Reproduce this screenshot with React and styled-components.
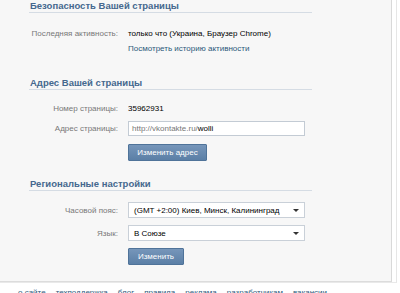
import React from "react";
import styled, { createGlobalStyle } from "styled-components";

const Global = createGlobalStyle`
  html, body { margin: 0; padding: 0; background: #fff; }
  body { font-family: "Liberation Sans", Arial, sans-serif; font-size: 8px; color: #000; }
`;

const Outer = styled.div`
  width: 396px;
  border-right: 1px solid #e6e6e6;
  border-bottom: 1px solid #e9e9e9;
`;

const Panel = styled.div`
  width: 392px;
  height: 282px;
  box-sizing: border-box;
  background: #f7f7f7;
  border-right: 1px solid #d9d9d9;
  border-bottom: 1px solid #dcdcdc;
  padding: 0 0 0 29px;
  display: flex;
  flex-direction: column;
`;

const Section = styled.section`
  width: 283px;
  margin-top: ${(p) => p.$top}px;
  display: flex;
  flex-direction: column;
`;

const Header = styled.h2`
  margin: 0;
  font-size: 9.5px;
  font-weight: bold;
  color: #45688e;
  line-height: 11px;
  height: 11px;
  padding: 0 0 1px 1px;
  border-bottom: 1px solid #d5dce4;
`;

const Row = styled.div`
  display: flex;
  align-items: center;
  margin-top: ${(p) => p.$top}px;
  min-height: ${(p) => p.$h || 11}px;
`;

const Label = styled.div`
  width: 89px;
  flex: none;
  text-align: right;
  color: #777;
  margin-right: 10px;
  white-space: nowrap;
`;

const Value = styled.div`
  color: #000;
  white-space: nowrap;
`;

const Link = styled.a`
  color: #2b587a;
  text-decoration: none;
  white-space: nowrap;
`;

const Input = styled.div`
  width: 177px;
  height: 15px;
  box-sizing: border-box;
  background: #fff;
  border: 1px solid #c3cbd4;
  padding: 0 3px;
  display: flex;
  align-items: center;
  color: #777;
  white-space: nowrap;
  b { font-weight: normal; color: #000; }
`;

const Select = styled.div`
  width: 177px;
  height: 16px;
  box-sizing: border-box;
  background: #fff;
  border: 1px solid #c9d0d8;
  padding: 0 5px 0 5px;
  display: flex;
  align-items: center;
  justify-content: space-between;
  color: #000;
  white-space: nowrap;
`;

const Arrow = styled.span`
  width: 0;
  height: 0;
  border-left: 3px solid transparent;
  border-right: 3px solid transparent;
  border-top: 3px solid #333;
`;

const Button = styled.button`
  width: ${(p) => p.$w}px;
  height: 17px;
  box-sizing: border-box;
  padding: 0;
  border: 1px solid #4f7399;
  border-radius: 1px;
  background: linear-gradient(#7696ba, #5b7fa6);
  color: #fff;
  font-family: inherit;
  font-size: 8px;
  cursor: pointer;
`;

const Spacer = styled.div`
  width: 89px;
  flex: none;
  margin-right: 10px;
`;

const Footer = styled.nav`
  display: flex;
  gap: 10px;
  padding: 5px 0 0 18px;
  height: 10px;
  overflow: hidden;
`;

const FLink = styled.a`
  color: #2b587a;
  text-decoration: none;
  white-space: nowrap;
  line-height: 10px;
`;

export default function App() {
  return (
    <>
      <Global />
      <Outer>
        <Panel>
          <Section $top={0}>
            <Header>Безопасность Вашей страницы</Header>
            <Row $top={15}>
              <Label>Последняя активность:</Label>
              <Value>только что (Украина, Браузер Chrome)</Value>
            </Row>
            <Row $top={4}>
              <Spacer />
              <Link href="#">Посмотреть историю активности</Link>
            </Row>
          </Section>
          <Section $top={23}>
            <Header>Адрес Вашей страницы</Header>
            <Row $top={13}>
              <Label>Номер страницы:</Label>
              <Value>35962931</Value>
            </Row>
            <Row $top={7} $h={15}>
              <Label>Адрес страницы:</Label>
              <Input>
                http://vkontakte.ru/<b>wolli</b>
              </Input>
            </Row>
            <Row $top={8} $h={17}>
              <Spacer />
              <Button $w={79}>Изменить адрес</Button>
            </Row>
          </Section>
          <Section $top={17}>
            <Header>Региональные настройки</Header>
            <Row $top={11} $h={16}>
              <Label>Часовой пояс:</Label>
              <Select>
                <span>(GMT +2:00) Киев, Минск, Калининград</span>
                <Arrow />
              </Select>
            </Row>
            <Row $top={7} $h={16}>
              <Label>Язык:</Label>
              <Select>
                <span>В Союзе</span>
                <Arrow />
              </Select>
            </Row>
            <Row $top={7} $h={17}>
              <Spacer />
              <Button $w={56}>Изменить</Button>
            </Row>
          </Section>
        </Panel>
      </Outer>
      <Footer>
        <FLink href="#">о сайте</FLink>
        <FLink href="#">техподдержка</FLink>
        <FLink href="#">блог</FLink>
        <FLink href="#">правила</FLink>
        <FLink href="#">реклама</FLink>
        <FLink href="#">разработчикам</FLink>
        <FLink href="#">вакансии</FLink>
      </Footer>
    </>
  );
}
